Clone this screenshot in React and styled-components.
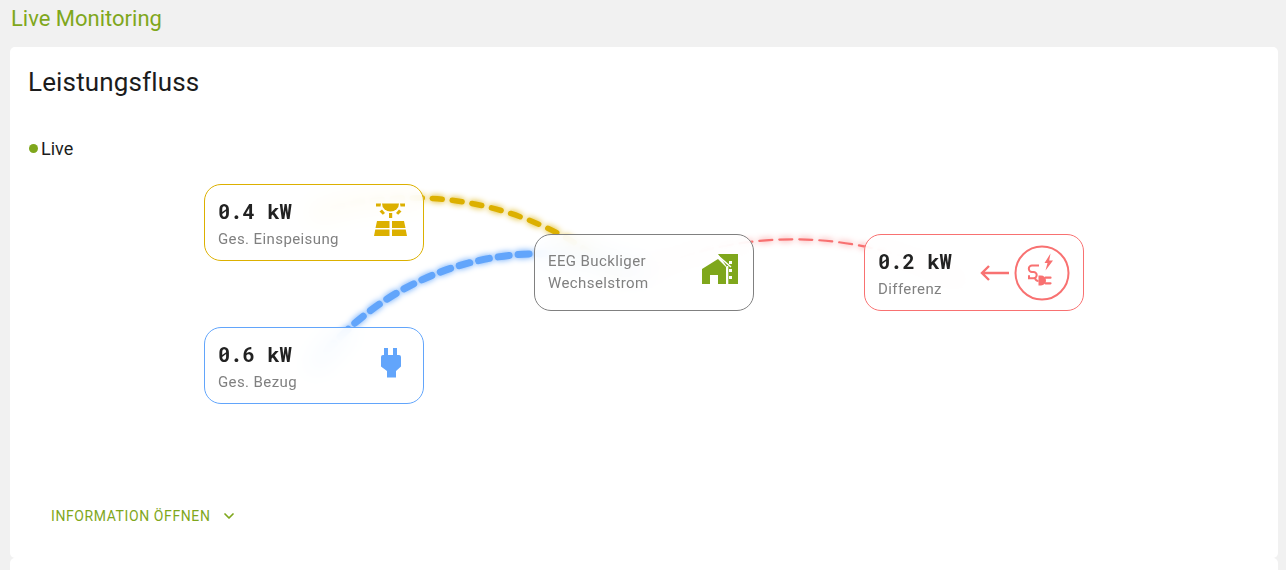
import React from "react";
import styled, { createGlobalStyle } from "styled-components";
import { ChevronDown } from "lucide-react";

const GREEN = "#7fa71c";
const YELLOW = "#dcb000";
const BLUE = "#62a5fb";
const RED = "#f87171";
const GREY = "#808080";

const Global = createGlobalStyle`
  html, body {
    margin: 0;
    height: 570px;
    overflow: hidden;
    background: #f1f1f1;
    font-family: Roboto, "Liberation Sans", sans-serif;
  }
`;

const Page = styled.div`
  padding: 0 8px 0 10px;
`;

const PageTitle = styled.h1`
  margin: 0;
  height: 47px;
  padding: 6px 0 0 1px;
  box-sizing: border-box;
  font-size: 22px;
  line-height: 26px;
  font-weight: 400;
  color: ${GREEN};
`;

const Card = styled.section`
  background: #fff;
  border-radius: 5px;
  height: 511px;
  box-sizing: border-box;
  padding: 20px 18px 0;
`;

const NextCard = styled.div`
  background: #fff;
  border-radius: 5px;
  height: 30px;
`;

const CardTitle = styled.h2`
  margin: 0;
  font-size: 26px;
  line-height: 30px;
  font-weight: 400;
  letter-spacing: 0.15px;
  color: #1c1c1c;
`;

const LiveRow = styled.div`
  display: flex;
  align-items: center;
  gap: 3px;
  margin-top: 39px;
  padding-left: 1px;
  height: 24px;
  font-size: 18px;
  color: #1c1c1c;
`;

const Dot = styled.span`
  width: 9px;
  height: 9px;
  border-radius: 50%;
  background: ${GREEN};
`;

const Canvas = styled.div`
  position: relative;
  height: 310px;
`;

const Flow = styled.svg`
  position: absolute;
  left: 0;
  top: 0;
  overflow: visible;
`;

const Line = styled.path`
  fill: none;
  stroke: ${(p) => p.$color};
  stroke-width: ${(p) => p.$width}px;
  stroke-dasharray: ${(p) => p.$dash};
  stroke-linecap: round;
  filter: drop-shadow(0 0 3px ${(p) => p.$color});
`;

const Node = styled.div`
  position: absolute;
  left: ${(p) => p.$left - 28}px;
  top: ${(p) => p.$top - 160}px;
  width: 220px;
  height: 77px;
  box-sizing: border-box;
  display: flex;
  align-items: center;
  justify-content: space-between;
  padding: 0 ${(p) => p.$padRight}px 0 13px;
  border: 1px solid ${(p) => p.$color};
  border-radius: 17px;
  background: rgba(255, 255, 255, 0.88);
  backdrop-filter: blur(13px);
`;

const Texts = styled.div`
  display: flex;
  flex-direction: column;
  gap: 6px;
  padding-top: 3px;
`;

const Names = styled.div`
  margin-top: -1px;
`;

const Value = styled.div`
  font-family: "Roboto Mono", "DejaVu Sans Mono", "Liberation Mono", monospace;
  font-weight: 700;
  font-size: 20.5px;
  line-height: 24px;
  color: #222;
`;

const Label = styled.div`
  font-size: 15px;
  line-height: 18px;
  letter-spacing: 0.4px;
  color: ${GREY};
`;

const Name = styled(Label)`
  line-height: 22px;
`;

const IconBox = styled.div`
  display: flex;
  padding-bottom: ${(p) => p.$lift}px;
`;

const Side = styled.div`
  display: flex;
  align-items: center;
  gap: 5px;
`;

const OpenButton = styled.button`
  display: flex;
  align-items: center;
  gap: 11px;
  margin: 36px 0 0 23px;
  padding: 0;
  border: 0;
  background: none;
  font-family: inherit;
  font-size: 14px;
  line-height: 20px;
  letter-spacing: 0.6px;
  text-transform: uppercase;
  color: ${GREEN};
`;

const SolarIcon = () => (
  <svg width="33" height="33" viewBox="0 0 33 33" fill={YELLOW}>
    <path d="M8 .5h17a8.500 8 0 0 1-17 0z" />
    <path d="M2 .5h5l-.5 3H2zM26 .5h5v3h-4.500z" />
    <path d="M5.500 8.500l2.500-2 3 3.500-2.200 1.800zM27.500 8.500l-2.500-2-3 3.500 2.200 1.800z" />
    <rect x="15" y="10" width="3.200" height="5" />
    <path d="M3 18h12.500v7H1.500zM18 18h12l1.500 7H18zM1.300 26.500h14.200V33H0zM18 26.500h13.700L33 33H18z" />
  </svg>
);

const PlugIcon = () => (
  <svg width="20" height="30" viewBox="0 0 20 30" fill={BLUE}>
    <path d="M3 0h4v7h5V0h4v7h2a2 2 0 0 1 2 2v9.500L15 23v6.500H6V23L0 18.500V9a2 2 0 0 1 2-2h1z" />
  </svg>
);

const HomeIcon = () => (
  <svg width="36" height="30" viewBox="0 0 36 30" fill={GREEN}>
    <path d="M16 0h20v30H25V13z" />
    <path d="M16 5L0 15v15h8v-9h8v9h8V13z" />
    <path d="M15 1l14 12M25.500 12v18" fill="none" stroke="#fff" strokeWidth="1.600" />
    <path fill="#fff" d="M27 7h3v3h-3zM27 15h3v3h-3zM27 22h3v3h-3z" />
  </svg>
);

const ArrowIcon = () => (
  <svg width="30" height="18" viewBox="0 0 30 18" fill="none" stroke={RED} strokeWidth="2.400">
    <path d="M30 9H3M10 2L3 9l7 7" />
  </svg>
);

const CableIcon = () => (
  <svg width="56" height="56" viewBox="0 0 56 56" fill="none">
    <circle cx="28" cy="28" r="26.500" stroke={RED} strokeWidth="2" />
    <path fill={RED} d="M36.500 8.500l-6 9.500h3l-2 7.500 7.500-10h-3.800z" />
    <path
      stroke={RED}
      strokeWidth="2"
      d="M25 20.500h-7a3.200 3.200 0 0 0 0 6.400h1.500a3.200 3.200 0 0 1 0 6.400H15v-3M21 33c.5 2 1.500 3 3.500 3"
    />
    <path fill={RED} d="M24.500 30.500h2.500a5 5 0 0 1 0 10h-2.500z" />
    <path stroke={RED} strokeWidth="2.200" strokeLinecap="round" d="M31.500 32.700h5M31.500 38.300h5" />
  </svg>
);

const App = () => {
  return (
    <Page>
      <Global />
      <PageTitle>Live Monitoring</PageTitle>
      <Card>
        <CardTitle>Leistungsfluss</CardTitle>
        <LiveRow>
          <Dot />
          Live
        </LiveRow>
        <Canvas>
          <Flow width="1250" height="310" viewBox="28 160 1250 310">
            <Line d="M314 214A313 313 0 0 1 620 276" $color={YELLOW} $width={5.5} $dash="10 10" />
            <Line d="M314 367A284 284 0 0 1 644 273" $color={BLUE} $width={7} $dash="11 9" />
            <Line d="M644 272A356 356 0 0 1 964 283" $color={RED} $width={2.2} $dash="13 7" />
          </Flow>
          <Node $left={204} $top={184} $color={YELLOW} $padRight={16}>
            <Texts>
              <Value>0.4 kW</Value>
              <Label>Ges. Einspeisung</Label>
            </Texts>
            <IconBox $lift={6}>
              <SolarIcon />
            </IconBox>
          </Node>
          <Node $left={204} $top={327} $color={BLUE} $padRight={22}>
            <Texts>
              <Value>0.6 kW</Value>
              <Label>Ges. Bezug</Label>
            </Texts>
            <IconBox $lift={6}>
              <PlugIcon />
            </IconBox>
          </Node>
          <Node $left={534} $top={234} $color={GREY} $padRight={15}>
            <Names>
              <Name>EEG Buckliger</Name>
              <Name>Wechselstrom</Name>
            </Names>
            <IconBox $lift={8}>
              <HomeIcon />
            </IconBox>
          </Node>
          <Node $left={864} $top={234} $color={RED} $padRight={13}>
            <Texts>
              <Value>0.2 kW</Value>
              <Label>Differenz</Label>
            </Texts>
            <Side>
              <ArrowIcon />
              <CableIcon />
            </Side>
          </Node>
        </Canvas>
        <OpenButton>
          Information öffnen
          <ChevronDown size={16} strokeWidth={2.6} />
        </OpenButton>
      </Card>
      <NextCard />
    </Page>
  );
};

export default App;
